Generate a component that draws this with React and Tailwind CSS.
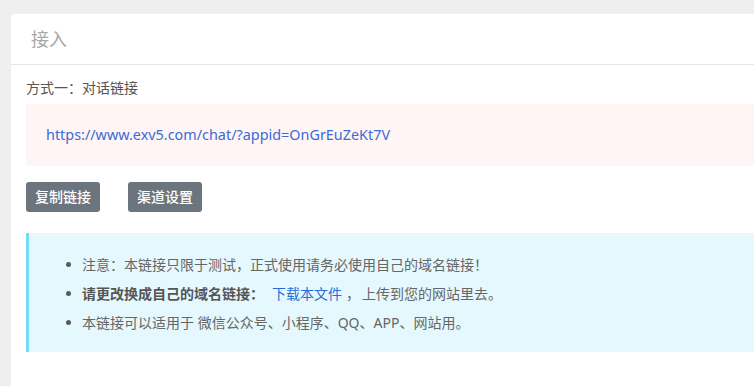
export default function App() {
  const font = { fontFamily: '"Noto Sans", "Noto Sans CJK SC", sans-serif' };
  const Dot = () => <span className="w-[5px] h-[5px] rounded-full bg-[#5a5a5a] mr-[11px] shrink-0"></span>;
  return (
    <div className="w-[754px] h-[386px] bg-[#efefef] overflow-hidden" style={font}>
      <div className="ml-[11px] mt-[14px] w-[760px] h-[400px] bg-white rounded-tl-[3px]">
        <div className="h-[51px] border-b border-[#e6e6e6] flex items-center pl-[20px]">
          <span className="text-[18px] text-[#a8a8a8]">接入</span>
        </div>
        <div className="pl-[15px]">
          <div className="pt-[13px] h-[33px] text-[14px] leading-[20px] text-[#555]">方式一：对话链接</div>
          <div className="mt-[6px] h-[62px] bg-[#fff5f5] flex items-center pl-[20px]">
            <span className="text-[14.4px] leading-[20px] text-[#3b6cd6]">https://www.exv5.com/chat/?appid=OnGrEuZeKt7V</span>
          </div>
          <div className="mt-[16px] flex gap-[28px]">
            <button className="h-[30px] px-[9px] rounded-[3px] bg-[#6c757d] text-white text-[14px] leading-[20px] font-medium">复制链接</button>
            <button className="h-[30px] px-[9px] rounded-[3px] bg-[#6c757d] text-white text-[14px] leading-[20px] font-medium">渠道设置</button>
          </div>
          <div className="mt-[21px] h-[119px] bg-[#e5f8fd] border-l-[3px] border-[#72dcf4] pt-[17px] pl-[37px]">
            <div className="flex flex-col text-[14px] leading-[29px] text-[#666]">
              <div className="flex items-center h-[29px]"><Dot />注意：本链接只限于测试，正式使用请务必使用自己的域名链接！</div>
              <div className="flex items-center h-[29px]">
                <Dot />
                <span className="font-bold text-[#555]">请更改换成自己的域名链接：</span>
                <span className="text-[#1f6fd8] ml-[8px]">下载本文件</span>
                <span className="ml-[4px] mr-[2px]">，</span>
                <span>上传到您的网站里去。</span>
              </div>
              <div className="flex items-center h-[29px]"><Dot />本链接可以适用于 微信公众号、小程序、QQ、APP、网站用。</div>
            </div>
          </div>
        </div>
      </div>
    </div>
  );
}
